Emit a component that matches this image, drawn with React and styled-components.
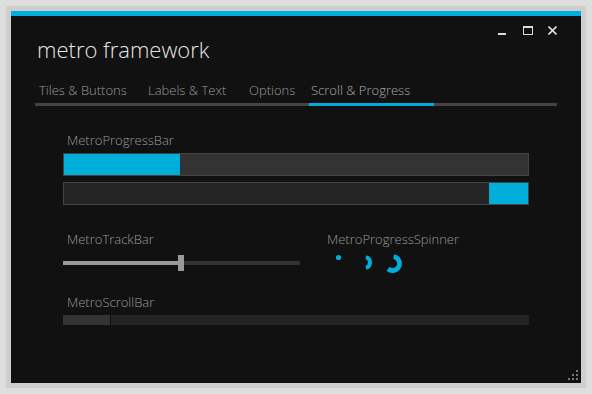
import styled, { createGlobalStyle } from "styled-components";

const blue = "#00aedb";

const GlobalStyle = createGlobalStyle`
  html, body {
    margin: 0;
    padding: 0;
    background: #dedede;
  }
  body {
    font-family: "Open Sans", "Segoe UI", sans-serif;
  }
`;

const tabs = [
  { id: 1, text: "Tiles & Buttons", width: 109, pad: 4 },
  { id: 2, text: "Labels & Text", width: 101, pad: 4 },
  { id: 3, text: "Options", width: 64, pad: 4 },
  { id: 4, text: "Scroll & Progress", width: 125, pad: 2, active: true },
];

const App = () => {
  return (
    <>
      <GlobalStyle />
      <Page>
        <Frame>
          <Window>
            <TopBar />
            <Header>
              <Title>metro framework</Title>
              <Controls>
                <ControlBtn type='button' aria-label='minimize'>
                  <svg width='9' height='9' viewBox='0 0 9 9'>
                    <rect x='0' y='7' width='8' height='2' fill='#ddd' />
                  </svg>
                </ControlBtn>
                <ControlBtn type='button' aria-label='maximize'>
                  <svg width='10' height='9' viewBox='0 0 10 9'>
                    <rect x='0.5' y='0.5' width='9' height='8' fill='none' stroke='#ddd' />
                    <rect x='0' y='0' width='10' height='2' fill='#ddd' />
                  </svg>
                </ControlBtn>
                <ControlBtn type='button' aria-label='close'>
                  <svg width='9' height='9' viewBox='0 0 9 9'>
                    <path d='M0.5 0.5 L8.5 8.5 M8.5 0.5 L0.5 8.5' stroke='#ddd' strokeWidth='1.6' />
                  </svg>
                </ControlBtn>
              </Controls>
            </Header>

            <TabStrip>
              {tabs.map(({ id, text, width, pad, active }) => (
                <Tab key={id} $width={width} $pad={pad} $active={active}>
                  {text}
                </Tab>
              ))}
            </TabStrip>

            <Content>
              <Section $gap={4}>
                <Label>MetroProgressBar</Label>
                <Bars>
                  <Progress $bg='#333333'>
                    <ProgressFill style={{ width: "25%" }} />
                  </Progress>
                  <Progress $bg='#252525' $end>
                    <ProgressFill style={{ width: "39px" }} />
                  </Progress>
                </Bars>
              </Section>

              <TwoCols>
                <Section $gap={7}>
                  <Label>MetroTrackBar</Label>
                  <Track>
                    <TrackDone style={{ width: "115px" }} />
                    <Thumb />
                    <TrackRest />
                  </Track>
                </Section>
                <Section $gap={2}>
                  <Label>MetroProgressSpinner</Label>
                  <Spinners>
                    <svg width='80' height='21' viewBox='0 0 80 21' overflow='visible'>
                      <circle cx='8.5' cy='7.5' r='2.6' fill={blue} />
                      <path
                        d='M35.92 7.19 A5.5 5.5 0 0 1 35.92 17.81'
                        fill='none'
                        stroke={blue}
                        strokeWidth='4'
                      />
                      <path
                        d='M63.72 6.61 A7 7 0 1 1 58 18.86'
                        fill='none'
                        stroke={blue}
                        strokeWidth='4.8'
                      />
                    </svg>
                  </Spinners>
                </Section>
              </TwoCols>

              <Section $gap={4}>
                <Label>MetroScrollBar</Label>
                <Scroll>
                  <ScrollThumb />
                  <ScrollTrack />
                </Scroll>
              </Section>
            </Content>

            <Grip width='10' height='10' viewBox='0 0 10 10'>
              <rect x='8' y='0' width='2' height='2' fill='#777' />
              <rect x='4' y='4' width='2' height='2' fill='#777' />
              <rect x='8' y='4' width='2' height='2' fill='#777' />
              <rect x='0' y='8' width='2' height='2' fill='#777' />
              <rect x='4' y='8' width='2' height='2' fill='#777' />
              <rect x='8' y='8' width='2' height='2' fill='#777' />
            </Grip>
          </Window>
        </Frame>
      </Page>
    </>
  );
};

const Page = styled.div`
  width: 592px;
  height: 394px;
  padding: 6px;
  box-sizing: border-box;
`;

const Frame = styled.div`
  width: 570px;
  height: 372px;
  border: 5px solid #cecece;
`;

const Window = styled.div`
  position: relative;
  width: 100%;
  height: 100%;
  background: #111111;
  display: flex;
  flex-direction: column;
`;

const TopBar = styled.div`
  height: 5px;
  background: ${blue};
`;

const Header = styled.div`
  display: flex;
  justify-content: space-between;
  align-items: flex-start;
  height: 60px;
  padding: 0 16px 0 26px;
`;

const Title = styled.h1`
  margin: 0;
  padding-top: 18px;
  font-size: 22px;
  line-height: 30px;
  font-weight: 300;
  color: #e6e6e6;
`;

const Controls = styled.div`
  display: flex;
  padding-top: 6px;
`;

const ControlBtn = styled.button`
  width: 25px;
  height: 16px;
  padding: 0;
  border: none;
  background: transparent;
  display: flex;
  align-items: center;
  justify-content: center;
  cursor: pointer;
`;

const TabStrip = styled.div`
  display: flex;
  margin: 0 24px;
  border-bottom: 3px solid #444444;
  height: 27px;
  align-items: center;
`;

const Tab = styled.div`
  width: ${({ $width }) => $width}px;
  padding-left: ${({ $pad }) => $pad}px;
  box-sizing: border-box;
  height: 100%;
  display: flex;
  align-items: center;
  font-size: 13px;
  font-weight: 300;
  color: ${({ $active }) => ($active ? "#aaaaaa" : "#999999")};
  position: relative;
  white-space: nowrap;
  &::after {
    content: "";
    position: absolute;
    left: 0;
    right: 0;
    bottom: -3px;
    height: 3px;
    background: ${({ $active }) => ($active ? blue : "transparent")};
  }
`;

const Content = styled.div`
  padding: 25px 52px 0 52px;
  display: flex;
  flex-direction: column;
  gap: 25px;

  & > :last-child {
    margin-top: -3px;
  }
`;

const Section = styled.div`
  display: flex;
  flex-direction: column;
  gap: ${({ $gap }) => $gap}px;
`;

const Label = styled.div`
  padding-left: 4px;
  font-size: 13px;
  line-height: 18px;
  font-weight: 300;
  color: #999999;
`;

const Bars = styled.div`
  display: flex;
  flex-direction: column;
  gap: 6px;
`;

const Progress = styled.div`
  height: 21px;
  border: 1px solid #444444;
  background: ${({ $bg }) => $bg};
  display: flex;
  justify-content: ${({ $end }) => ($end ? "flex-end" : "flex-start")};
`;

const ProgressFill = styled.div`
  height: 100%;
  background: ${blue};
`;

const TwoCols = styled.div`
  display: grid;
  grid-template-columns: 237px 1fr;
  column-gap: 23px;
`;

const Track = styled.div`
  height: 16px;
  display: flex;
  align-items: center;
`;

const TrackDone = styled.div`
  height: 4px;
  background: #999999;
`;

const Thumb = styled.div`
  width: 6px;
  height: 16px;
  background: #999999;
`;

const TrackRest = styled.div`
  flex: 1;
  height: 4px;
  background: #333333;
`;

const Spinners = styled.div`
  padding-left: 7px;
  height: 21px;
`;

const Scroll = styled.div`
  height: 10px;
  display: flex;
  gap: 1px;
`;

const ScrollThumb = styled.div`
  width: 47px;
  background: #333333;
`;

const ScrollTrack = styled.div`
  flex: 1;
  background: #252525;
`;

const Grip = styled.svg`
  position: absolute;
  right: 3px;
  bottom: 3px;
`;

export default App;
